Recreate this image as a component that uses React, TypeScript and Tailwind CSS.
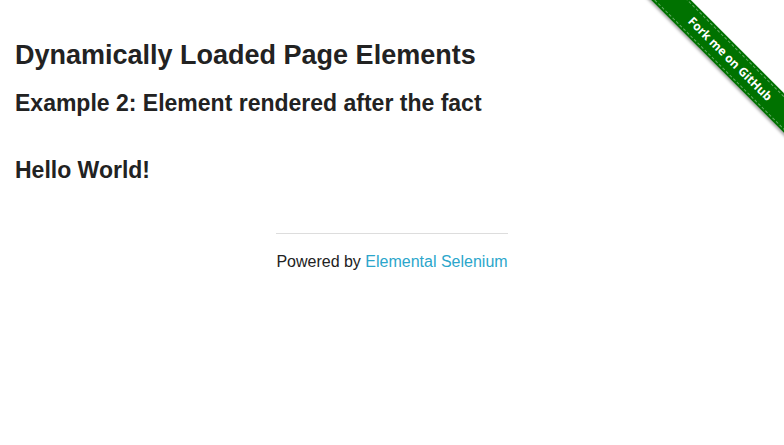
import React from "react";

export default function App() {
  return (
    <div className="relative min-h-[445px] bg-white text-[#222222]" style={{ fontFamily: '"Liberation Sans", Arial, sans-serif' }}>
      <div className="absolute top-0 right-0 w-[149px] h-[149px] overflow-hidden">
        <div className="absolute left-[-15px] top-[45px] w-[220px] h-[28px] rotate-45 bg-[#007200] shadow-[0_2px_3px_rgba(0,0,0,0.35)] flex items-center justify-center">
          <div className="absolute inset-x-0 top-[2px] border-t border-dashed border-white/40" />
          <div className="absolute inset-x-0 bottom-[2px] border-t border-dashed border-white/40" />
          <span className="text-white font-bold text-[12px] leading-none" style={{ fontFamily: '"Open Sans", "DejaVu Sans", sans-serif' }}>
            Fork me on GitHub
          </span>
        </div>
      </div>
      <div className="px-[15px] pt-[37px]">
        <h3 className="text-[27px] font-bold leading-[1.4] mb-[12px]">Dynamically Loaded Page Elements</h3>
        <h4 className="text-[23px] font-bold leading-[1.4]">Example 2: Element rendered after the fact</h4>
        <h4 className="text-[23px] font-bold leading-[1.4] mt-[35px]">Hello World!</h4>
      </div>
      <div className="mt-[47px] mx-auto w-[232px]">
        <hr className="border-t border-[#dddddd]" />
        <div className="text-center text-[16px] leading-[1.6] mt-[15px]">
          Powered by <a className="text-[#2ba6cb]">Elemental Selenium</a>
        </div>
      </div>
    </div>
  );
}
